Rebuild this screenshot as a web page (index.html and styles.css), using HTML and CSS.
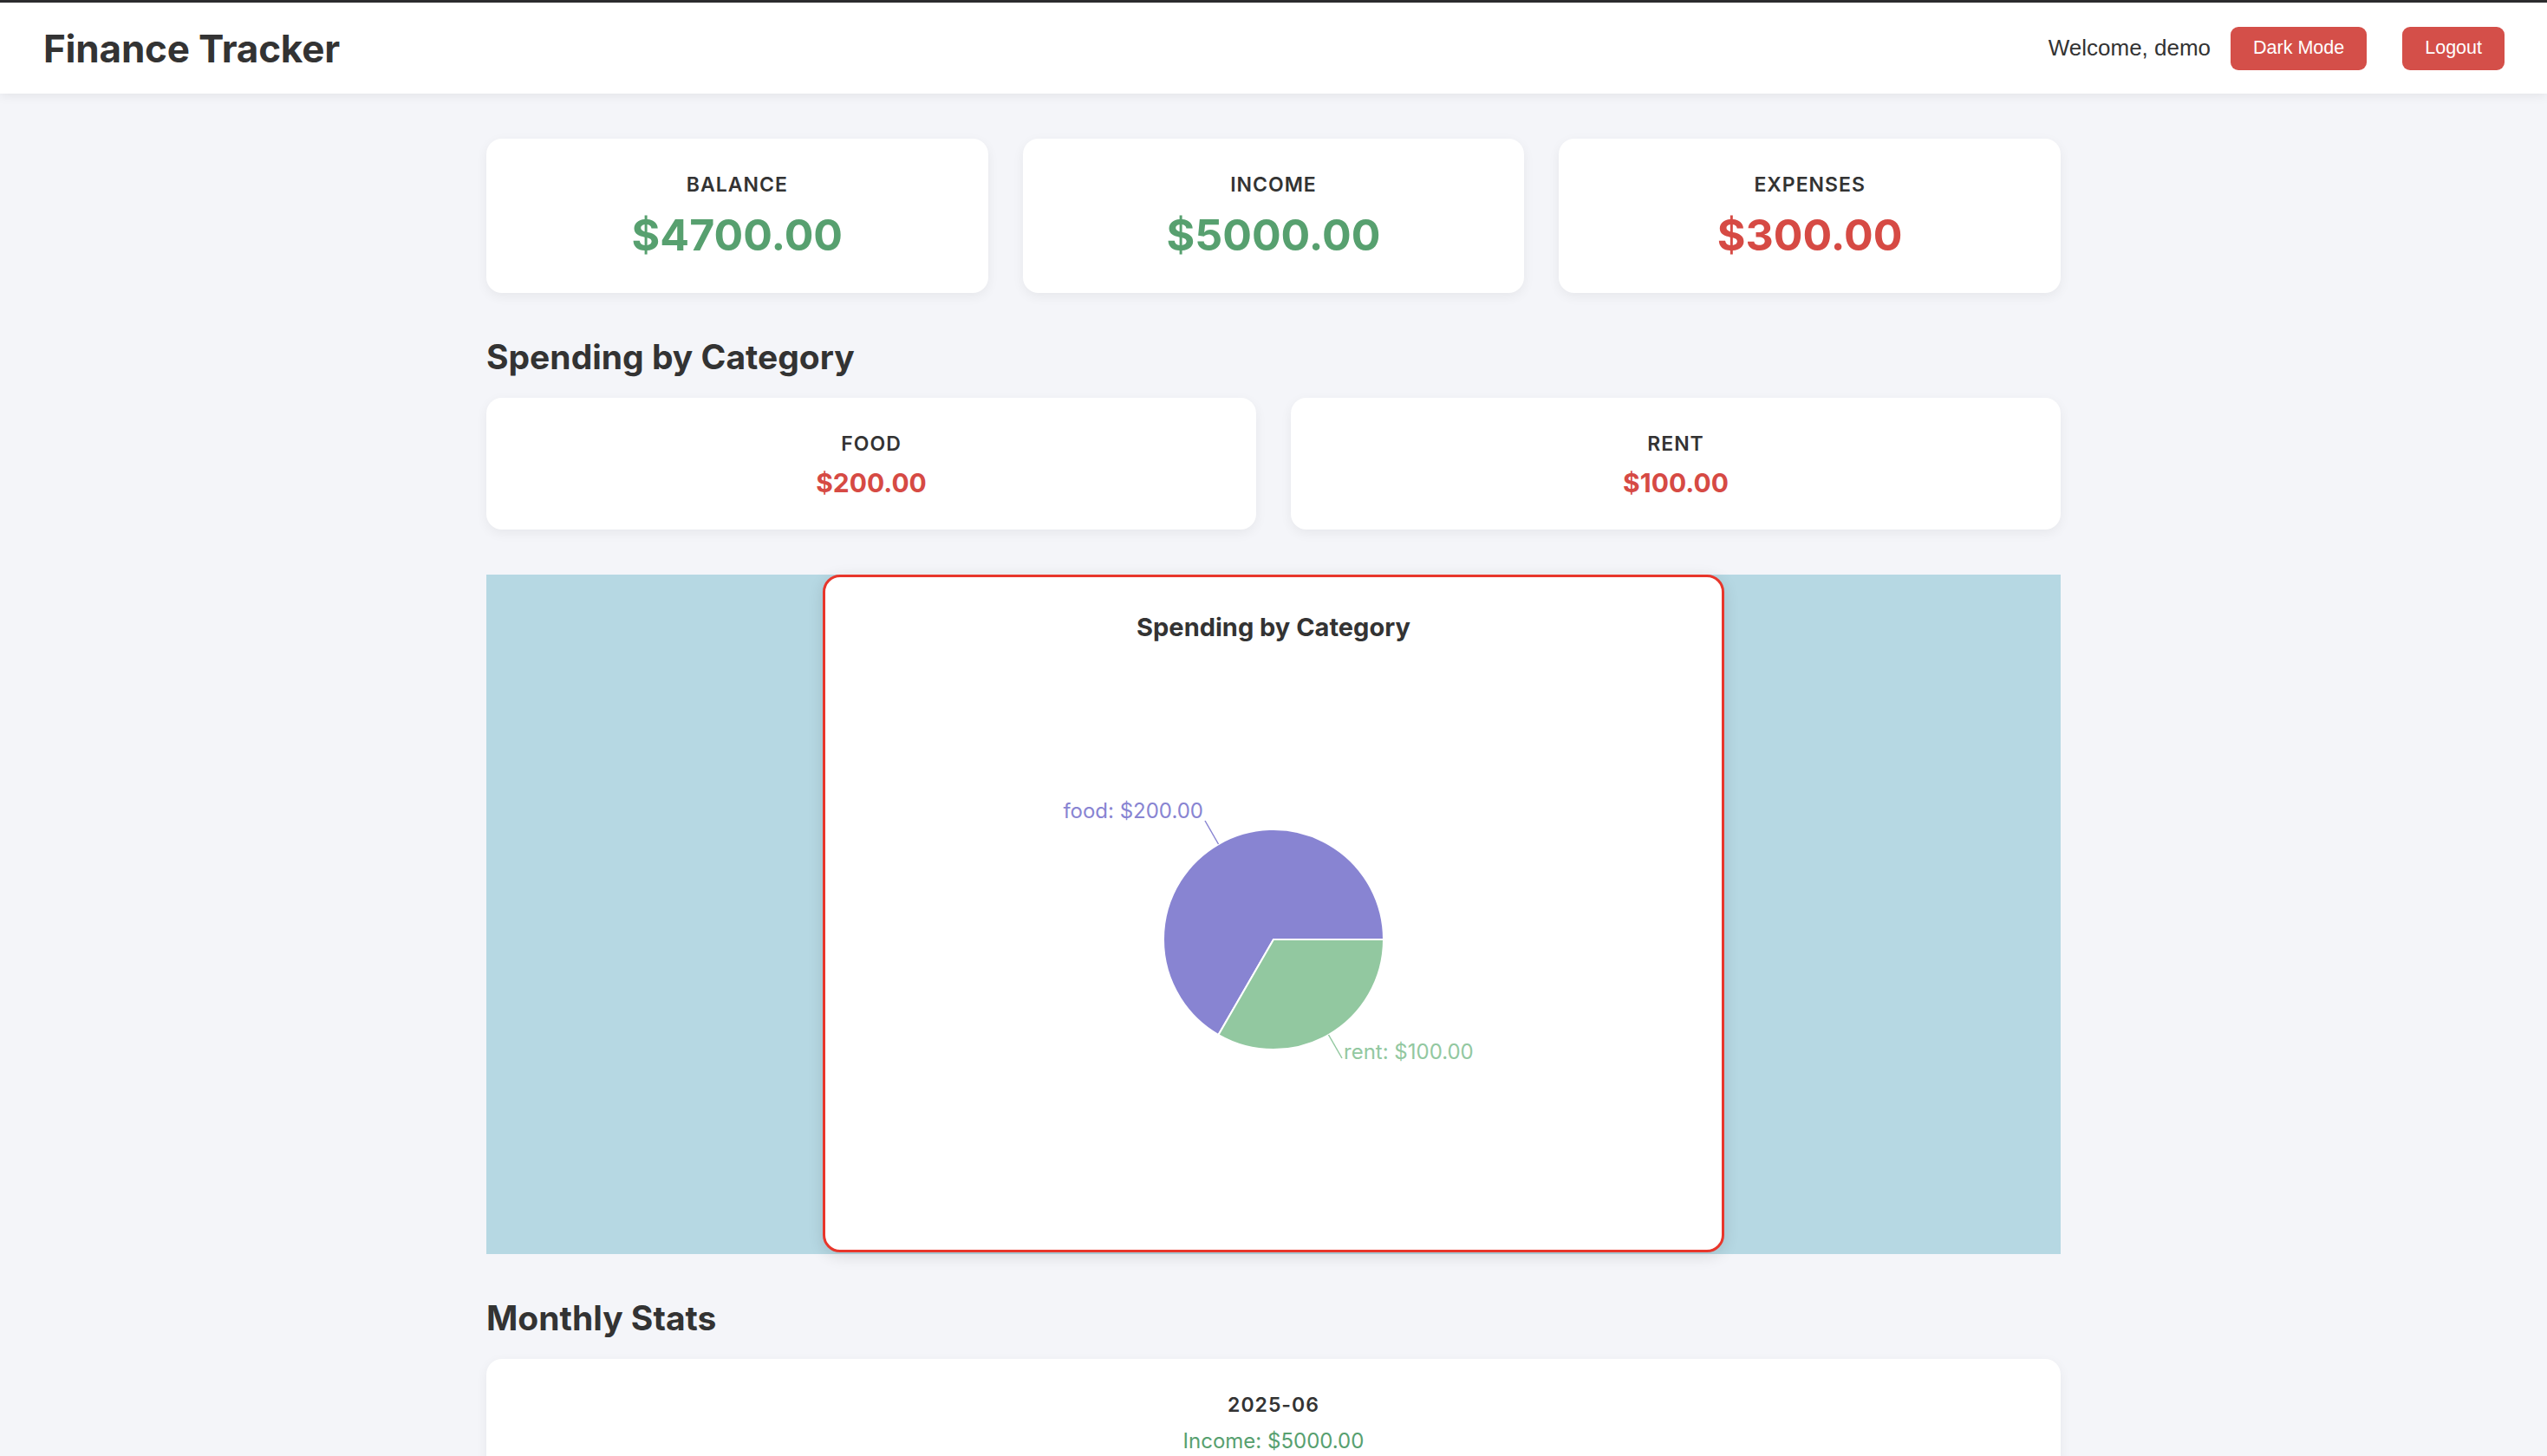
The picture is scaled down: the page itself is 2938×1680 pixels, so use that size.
FILE: index.html
```html
<!DOCTYPE html>
<html lang="en">
<head>
<meta charset="utf-8">
<title>Finance Tracker</title>
<link rel="stylesheet" href="styles.css">
</head>
<body>
<header class="topbar">
  <h1 class="brand">Finance Tracker</h1>
  <div class="user-area">
    <span class="welcome">Welcome, demo</span>
    <button class="btn">Dark Mode</button>
    <button class="btn btn-logout">Logout</button>
  </div>
</header>

<main class="container">
  <section class="summary">
    <div class="card">
      <div class="card-label">BALANCE</div>
      <div class="card-value big positive">$4700.00</div>
    </div>
    <div class="card">
      <div class="card-label">INCOME</div>
      <div class="card-value big positive">$5000.00</div>
    </div>
    <div class="card">
      <div class="card-label">EXPENSES</div>
      <div class="card-value big negative">$300.00</div>
    </div>
  </section>

  <h2 class="section-title">Spending by Category</h2>
  <section class="categories">
    <div class="card">
      <div class="card-label">FOOD</div>
      <div class="card-value mid negative">$200.00</div>
    </div>
    <div class="card">
      <div class="card-label">RENT</div>
      <div class="card-value mid negative">$100.00</div>
    </div>
  </section>

  <section class="chart-wrap">
    <div class="chart-box">
      <h3 class="chart-title">Spending by Category</h3>
      <svg class="chart-svg" width="1034" height="661" viewBox="0 0 1034 661">
        <path d="M517,343 L644,343 A127,127 0 1,0 453.5,453 Z" fill="#8884d2" stroke="#fff" stroke-width="2"/>
        <path d="M517,343 L453.5,453 A127,127 0 0,0 644,343 Z" fill="#92c8a0" stroke="#fff" stroke-width="2"/>
        <line x1="453.5" y1="233" x2="438" y2="206" stroke="#8884d2" stroke-width="1.5"/>
        <line x1="580.5" y1="453" x2="596" y2="480" stroke="#92c8a0" stroke-width="1.5"/>
        <text class="pie-label" x="436" y="203" text-anchor="end" fill="#8884d2">food: $200.00</text>
        <text class="pie-label" x="598" y="481" text-anchor="start" fill="#92c8a0">rent: $100.00</text>
      </svg>
    </div>
  </section>

  <h2 class="section-title">Monthly Stats</h2>
  <section class="monthly">
    <div class="card">
      <div class="card-label">2025-06</div>
      <div class="month-line positive">Income: $5000.00</div>
    </div>
  </section>
</main>
</body>
</html>
```

FILE: styles.css
```css
* {
  box-sizing: border-box;
}

html, body {
  margin: 0;
  padding: 0;
}

body {
  background: #f4f5f9;
  font-family: Inter, "Noto Sans", "Liberation Sans", sans-serif;
  color: #333333;
}

.topbar {
  height: 108px;
  border-top: 3px solid #2c2c2e;
  background: #ffffff;
  box-shadow: 0 2px 12px rgba(0, 0, 0, 0.08);
  display: flex;
  align-items: center;
  justify-content: space-between;
  padding: 0 49px 0 50px;
  position: relative;
  z-index: 1;
}

.brand {
  margin: 0;
  font-size: 44px;
  font-weight: 700;
  color: #333333;
  letter-spacing: -0.2px;
}

.user-area {
  display: flex;
  align-items: center;
  gap: 23px;
}

.welcome {
  font-family: "Liberation Sans", Arial, sans-serif;
  font-size: 26px;
  color: #333333;
}

.btn {
  font-family: "Liberation Sans", Arial, sans-serif;
  font-size: 21.5px;
  color: #ffffff;
  background: #d44f49;
  border: none;
  border-radius: 9px;
  height: 50px;
  padding: 0 26px;
}

.btn-logout {
  margin-left: 18px;
}

.container {
  width: 1816px;
  margin: 0 auto;
  padding-top: 52px;
}

.summary {
  display: grid;
  grid-template-columns: repeat(3, 1fr);
  gap: 40px;
}

.categories {
  display: grid;
  grid-template-columns: repeat(2, 1fr);
  gap: 40px;
}

.card {
  background: #ffffff;
  border-radius: 18px;
  box-shadow: 0 4px 14px rgba(0, 0, 0, 0.06);
  text-align: center;
  padding: 39px 20px 36px;
}

.card-label {
  font-size: 23px;
  line-height: 28px;
  font-weight: 600;
  letter-spacing: 1px;
  color: #333333;
}

.card-value {
  font-weight: 700;
}

.card-value.big {
  font-size: 50px;
  line-height: 61px;
  margin-top: 14px;
}

.card-value.mid {
  font-size: 30px;
  line-height: 36px;
  margin-top: 13px;
}

.positive {
  color: #57a06f;
}

.negative {
  color: #d64a44;
}

.section-title {
  margin: 52px 0 25px;
  font-size: 39px;
  line-height: 44px;
  font-weight: 700;
  color: #333333;
}

.chart-wrap {
  margin-top: 52px;
  background: #b6d8e3;
  height: 784px;
  display: flex;
  justify-content: center;
}

.chart-box {
  width: 1040px;
  height: 782px;
  background: #ffffff;
  border: 3px solid #e8362b;
  border-radius: 20px;
  box-shadow: 0 4px 18px rgba(0, 0, 0, 0.12);
  padding-top: 40px;
  text-align: center;
}

.chart-title {
  margin: 0;
  font-size: 29px;
  line-height: 35px;
  font-weight: 700;
  color: #333333;
}

.chart-svg {
  display: block;
}

.pie-label {
  font-family: Inter, "Noto Sans", sans-serif;
  font-size: 24px;
}

.monthly {
  display: block;
}

.month-line {
  font-size: 24px;
  line-height: 29px;
  margin-top: 13px;
}
```
